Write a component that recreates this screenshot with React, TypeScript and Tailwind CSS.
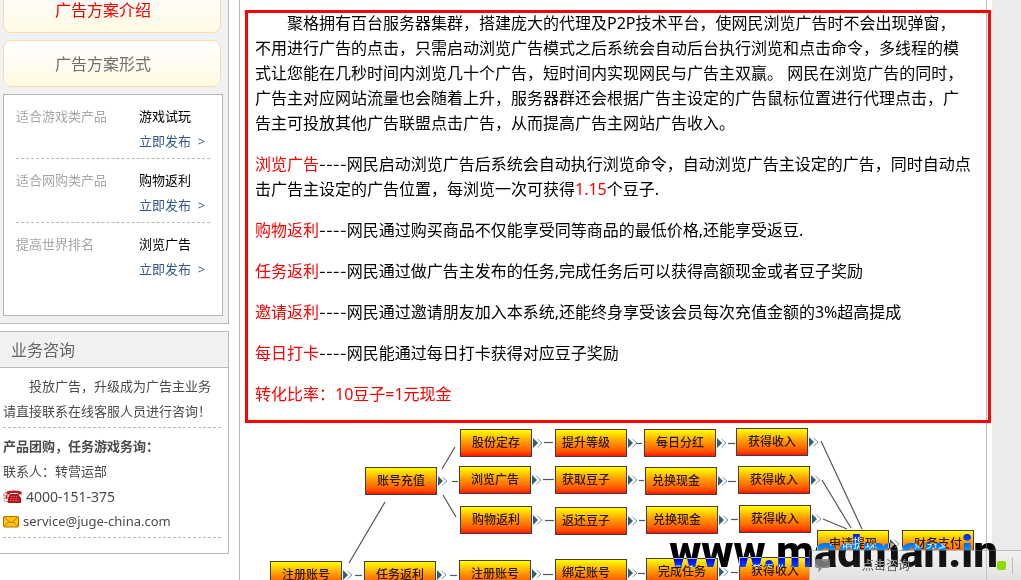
import React from "react";

const sans = "font-['Noto_Sans','Noto_Sans_CJK_SC',sans-serif]";

type Product = { audience: string; name: string };

const products: Product[] = [
  { audience: "适合游戏类产品", name: "游戏试玩" },
  { audience: "适合网购类产品", name: "购物返利" },
  { audience: "提高世界排名", name: "浏览广告" },
];

type FlowNode = { x: number; y: number; label: string; start?: boolean; last?: boolean };

const nodes: FlowNode[] = [
  { x: 220, y: 6, label: "股份定存" },
  { x: 315, y: 6, label: "提升等级", start: true },
  { x: 404, y: 6, label: "每日分红" },
  { x: 496, y: 5, label: "获得收入" },
  { x: 125, y: 44, label: "账号充值" },
  { x: 219, y: 43, label: "浏览广告" },
  { x: 315, y: 43, label: "获取豆子", start: true },
  { x: 405, y: 44, label: "兑换现金", start: true },
  { x: 498, y: 43, label: "获得收入" },
  { x: 220, y: 83, label: "购物返利" },
  { x: 315, y: 84, label: "返还豆子", start: true },
  { x: 406, y: 83, label: "兑换现金", start: true },
  { x: 499, y: 82, label: "获得收入" },
  { x: 30, y: 138, label: "注册账号" },
  { x: 124, y: 138, label: "任务返利" },
  { x: 219, y: 137, label: "注册账号" },
  { x: 315, y: 136, label: "绑定账号", start: true },
  { x: 406, y: 135, label: "完成任务" },
  { x: 499, y: 134, label: "获得收入" },
  { x: 577, y: 107, label: "申请提现" },
  { x: 662, y: 107, label: "财务支付", last: true },
];

const lines: number[][] = [
  [304, 19, 313, 19], [396, 20, 402, 20], [488, 20, 495, 20],
  [212, 58, 218, 58], [303, 56, 314, 56], [399, 57, 404, 57], [488, 58, 496, 58],
  [305, 97, 314, 97], [399, 97, 405, 97], [491, 96, 498, 96],
  [115, 152, 122, 152], [210, 152, 217, 152], [303, 151, 313, 151],
  [398, 150, 405, 150], [491, 149, 498, 149],
  [202, 46, 215, 24], [203, 72, 216, 94], [109, 140, 145, 79],
  [581, 18, 622, 106], [582, 57, 611, 105], [583, 96, 607, 106],
];

function FlowChart() {
  return (
    <div className="relative min-h-0 flex-1 overflow-hidden">
      <svg className="absolute left-0 top-0" width="746" height="166" fill="none" aria-hidden="true">
        {lines.map(([x1, y1, x2, y2], i) => (
          <line key={i} x1={x1} y1={y1 + (y1 === y2 ? 0.5 : 0)} x2={x2} y2={y2 + (y1 === y2 ? 0.5 : 0)} stroke="#555" strokeWidth="1.2" />
        ))}
        {nodes.filter((n) => !n.last).map((n, i) => (
          <g key={i} transform={`translate(${n.x + 73} ${n.y + 9})`}>
            <path d="M0 0L5 5L0 10Z" fill="#315f78" />
            <path d="M4.5 1L9 5L4.500 9" stroke="#7f95a3" />
          </g>
        ))}
      </svg>
      {nodes.map((n, i) => (
        <div
          key={i}
          className={`absolute flex h-7 w-[72px] items-center border border-[#4d3a3f] bg-linear-to-b from-[#ffff00] via-[#ff9000] to-[#ff0800] text-xs font-medium whitespace-nowrap text-[#2e1604] ${n.start ? "pl-[6px]" : "justify-center"}`}
          style={{ left: n.x, top: n.y }}
        >
          {n.label}
        </div>
      ))}
    </div>
  );
}

function PlanLink({ children, active }: { children: string; active?: boolean }) {
  return (
    <a
      href="#"
      className={`flex h-[47px] w-[218px] items-center rounded-lg border border-[#f9dcb4] bg-linear-to-b from-white to-[#fffae3] pl-[51px] text-base ${active ? "text-[#f00000]" : "text-[#707070]"}`}
    >
      {children}
    </a>
  );
}

function Sidebar() {
  return (
    <aside className="w-[229px] shrink-0 text-[13px] leading-[25px]">
      <div className="h-[324px] overflow-hidden border-r border-b border-[#b9b9b9] bg-[#f1f1f1] pl-[3px]">
        <nav className="-mt-[14px] flex flex-col gap-[7px]">
          <PlanLink active>广告方案介绍</PlanLink>
          <PlanLink>广告方案形式</PlanLink>
        </nav>
        <ul className="mt-[7px] h-[222px] w-[220px] border border-[#b4b4b4] bg-white px-3">
          {products.map((p, i) => (
            <li
              key={p.name}
              className={`flex pt-[9px] pb-1 ${i < 2 ? "border-b border-dashed border-[#b9b9b9]" : ""}`}
            >
              <span className="w-[123px] text-[#a6a6a6]">{p.audience}</span>
              <div className="flex flex-col text-black">
                <span>{p.name}</span>
                <a href="#" className="text-[#36598c]">立即发布 &nbsp;&gt;</a>
              </div>
            </li>
          ))}
        </ul>
      </div>

      <section className="mt-[7px] border-y border-r border-[#b9b9b9] pb-[15px] text-[#4b4b4b]">
        <h2 className="flex h-9 items-center border-b border-[#b9b9b9] bg-[#f1f1f1] pl-[11px] text-base text-[#666]">
          业务咨询
        </h2>
        <div className="ml-[3px] w-[218px]">
          <p className="border-b border-dashed border-[#b9b9b9] pt-[6px] pb-[3px] indent-[26px] whitespace-nowrap">
            投放广告，升级成为广告主业务
            <br />
            请直接联系在线客服人员进行咨询！
          </p>
          <div className="border-b border-dashed border-[#b9b9b9] pt-[6px] pb-[3px]">
            <p className="font-bold">产品团购，任务游戏务询：</p>
            <p>联系人：转营运部</p>
            <p className="flex items-center gap-1 text-sm leading-[25px]">
              <svg width="19" height="14" viewBox="0 0 19 14" aria-hidden="true">
                <path d="M4 1.5Q11 -0.5 18 1.5Q19 2 18.5 4.5H15V3H7V4.5H3.5Q3.3 2 4 1.5Z" fill="#c4151b" />
                <path d="M7 4H15L18 8V13H5V8Z" fill="#b8131a" />
                <path d="M8 6.5H14M7.5 8.5H15M7 10.5H15.5" stroke="#d9686c" strokeDasharray="1.5 1" />
                <path d="M3.5 2.5Q0.5 3 1 5.5T1 9Q1 12.5 5 11.5" fill="none" stroke="#b73b40" strokeDasharray="2 1" />
                <path d="M2.5 5H4.5V9H2.5Z" fill="#d22" />
              </svg>
              4000-151-375
            </p>
            <p className="flex items-center gap-1">
              <svg width="16" height="12" viewBox="0 0 16 12" aria-hidden="true">
                <rect x="0.5" y="0.5" width="15" height="10.5" rx="1" fill="#ffc50a" stroke="#b87208" />
                <path d="M1 1L6.5 6Q8 7 9.5 6L15 1M1 10.5L6 5.8M15 10.5L10 5.8" fill="none" stroke="#b87208" />
              </svg>
              <a href="mailto:service@juge-china.com">service@juge-china.com</a>
            </p>
          </div>
        </div>
      </section>
    </aside>
  );
}

const rules = [
  { title: "购物返利", text: "网民通过购买商品不仅能享受同等商品的最低价格,还能享受返豆." },
  { title: "任务返利", text: "网民通过做广告主发布的任务,完成任务后可以获得高额现金或者豆子奖励" },
  { title: "邀请返利", text: "网民通过邀请朋友加入本系统,还能终身享受该会员每次充值金额的3%超高提成" },
  { title: "每日打卡", text: "网民能通过每日打卡获得对应豆子奖励" },
];

function Term({ children }: { children: string }) {
  return (
    <>
      <span className="text-[#f00]">{children}</span>
      <span className="font-['Inter',sans-serif] text-[15px]">----</span>
    </>
  );
}

function Article() {
  return (
    <article className="-mr-[5px] ml-[5px] flex h-[413px] flex-col gap-4 border-3 border-[#f00] px-[7px] text-base leading-[25px] text-black">
      <p className="-mt-0.5 indent-8">
        聚格拥有百台服务器集群，搭建庞大的代理及P2P技术平台，使网民浏览广告时不会出现弹窗，
        <br />
        不用进行广告的点击，只需启动浏览广告模式之后系统会自动后台执行浏览和点击命令，多线程的模
        <br />
        式让您能在几秒时间内浏览几十个广告，短时间内实现网民与广告主双赢。 网民在浏览广告的同时，
        <br />
        广告主对应网站流量也会随着上升，服务器群还会根据广告主设定的广告鼠标位置进行代理点击，广
        <br />
        告主可投放其他广告联盟点击广告，从而提高广告主网站广告收入。
      </p>
      <p>
        <Term>浏览广告</Term>网民启动浏览广告后系统会自动执行浏览命令，自动浏览广告主设定的广告，同时自动点
        <br />
        击广告主设定的广告位置，每浏览一次可获得<span className="text-[#f00]">1.15</span>个豆子.
      </p>
      {rules.map((r) => (
        <p key={r.title}>
          <Term>{r.title}</Term>
          {r.text}
        </p>
      ))}
      <p className="text-[#f00]">转化比率：10豆子=1元现金</p>
    </article>
  );
}

export default function App() {
  return (
    <div className={`relative flex h-screen overflow-hidden bg-white ${sans}`}>
      <Sidebar />
      <main className="ml-[10px] flex min-w-0 flex-1 flex-col border-x border-[#b9b9b9] pt-[10px]">
        <Article />
        <FlowChart />
      </main>
      <div className="ml-[5px] w-[29px] shrink-0 bg-[#ebebeb]" />

      <button
        type="button"
        className="absolute right-0 bottom-0 flex h-[30px] w-[212px] items-center border-t border-l border-[#bcbcbc] bg-linear-to-b from-[#f1f1f1] to-[#e2e2e2] pl-[5px] text-xs text-[#555]"
      >
        <svg width="15" height="15" viewBox="0 0 15 15" aria-hidden="true">
          <path d="M2 1H13Q15 1 15 3V8Q15 10 13 10H7L3.5 14.5V10H2Q0 10 0 8V3Q0 1 2 1Z" fill="#8d8d8d" />
        </svg>
        <span className="ml-8">点击咨询</span>
        <span className="mr-[10px] ml-auto h-full border-l border-[#c4c4c4]" />
        <span className="mr-[6px] size-[9px] rounded-xs bg-[#8fdc00]" />
        <span className="mr-2 h-4 border-l border-[#bbb]" />
      </button>

      <div className="pointer-events-none absolute right-[23px] bottom-0 font-['Roboto',sans-serif] text-[44px] leading-[56px] font-extrabold whitespace-nowrap text-white mix-blend-difference">
        www.madman.in
      </div>
    </div>
  );
}
